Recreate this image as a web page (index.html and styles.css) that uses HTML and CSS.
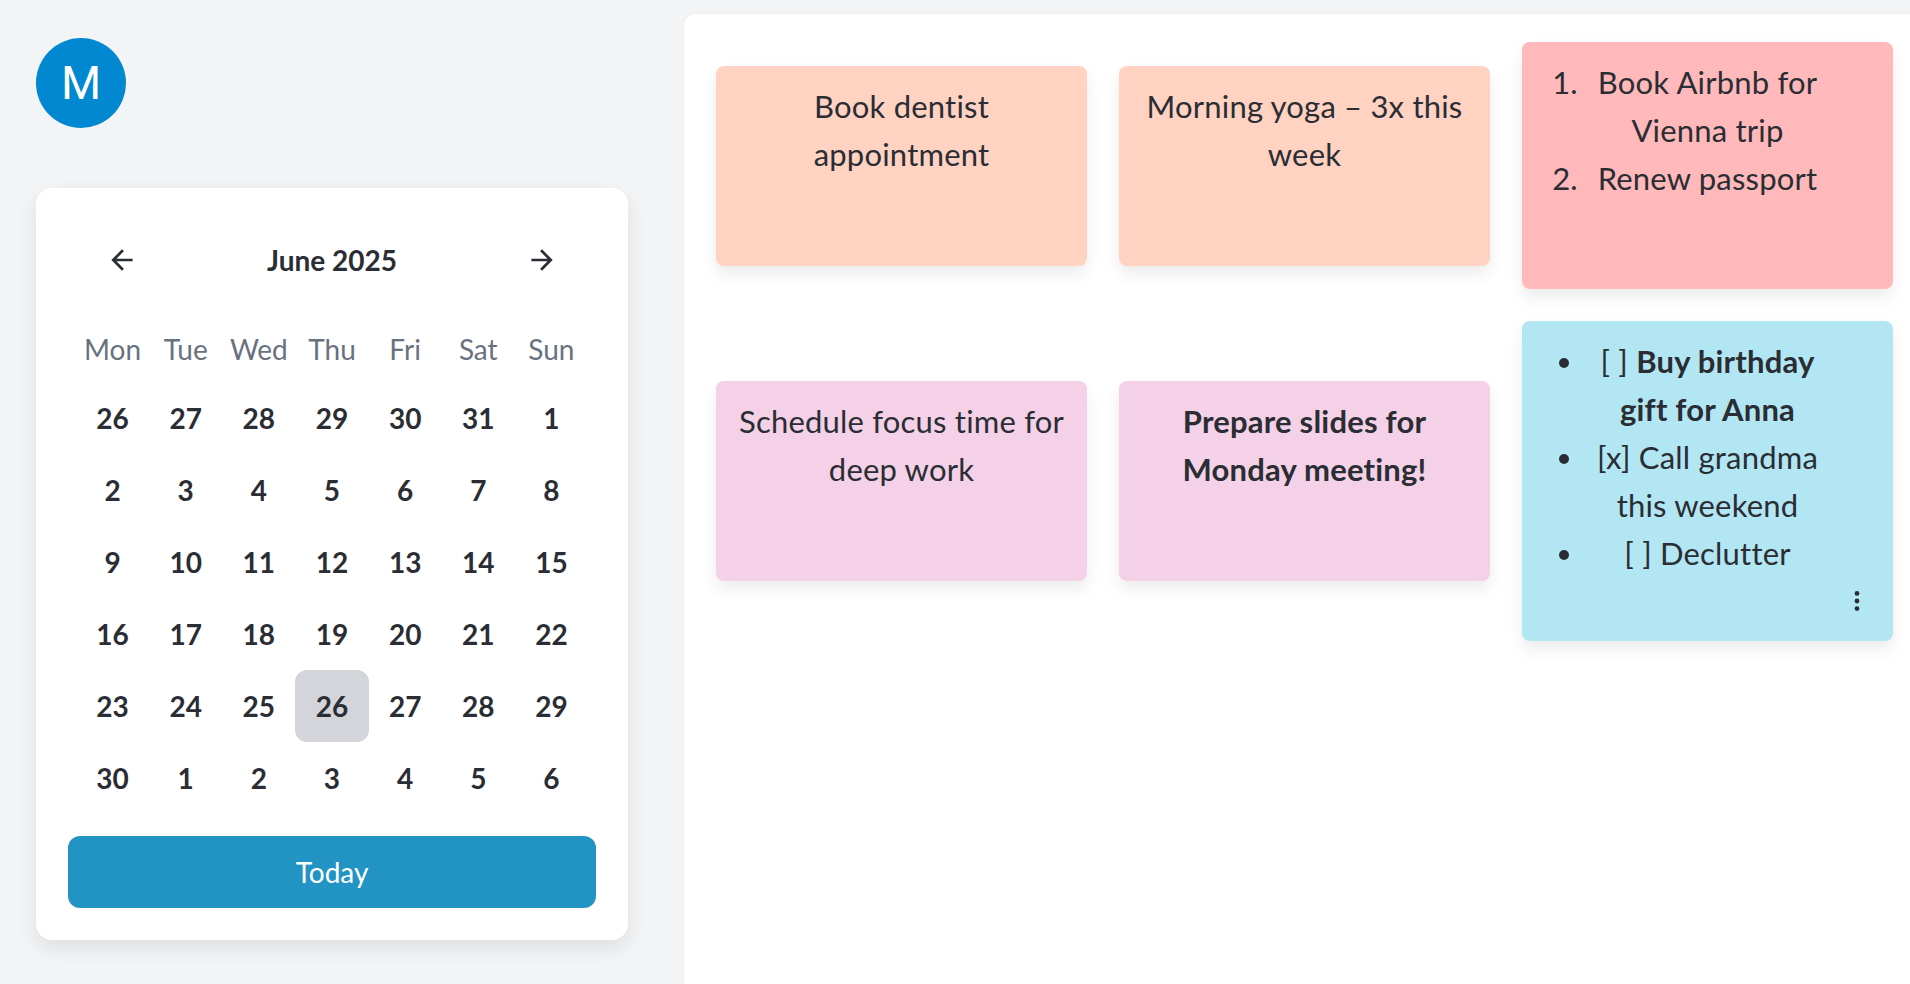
FILE: index.html
```html
<!DOCTYPE html>
<html lang="en">
<head>
  <meta charset="UTF-8" />
  <meta name="viewport" content="width=device-width, initial-scale=1.0"/>
  <title>Notes</title>
  <link rel="stylesheet" href="styles.css">
</head>
<body>

<div class="app">
  <aside class="sidebar">
    <div class="avatar">M</div>

    <div class="calendar">
      <div class="cal-header">
        <button class="cal-nav" aria-label="Previous month">
          <svg viewBox="0 0 24 24"><path d="M20 11H7.83l5.59-5.59L12 4l-8 8 8 8 1.41-1.41L7.83 13H20v-2z"/></svg>
        </button>
        <div class="cal-title">June 2025</div>
        <button class="cal-nav" aria-label="Next month">
          <svg viewBox="0 0 24 24"><path d="M12 4l-1.41 1.41L16.17 11H4v2h12.17l-5.58 5.59L12 20l8-8z"/></svg>
        </button>
      </div>

      <div class="cal-grid">
        <div class="weekday">Mon</div>
        <div class="weekday">Tue</div>
        <div class="weekday">Wed</div>
        <div class="weekday">Thu</div>
        <div class="weekday">Fri</div>
        <div class="weekday">Sat</div>
        <div class="weekday">Sun</div>

        <div class="day">26</div><div class="day">27</div><div class="day">28</div><div class="day">29</div><div class="day">30</div><div class="day">31</div><div class="day">1</div>
        <div class="day">2</div><div class="day">3</div><div class="day">4</div><div class="day">5</div><div class="day">6</div><div class="day">7</div><div class="day">8</div>
        <div class="day">9</div><div class="day">10</div><div class="day">11</div><div class="day">12</div><div class="day">13</div><div class="day">14</div><div class="day">15</div>
        <div class="day">16</div><div class="day">17</div><div class="day">18</div><div class="day">19</div><div class="day">20</div><div class="day">21</div><div class="day">22</div>
        <div class="day">23</div><div class="day">24</div><div class="day">25</div><div class="day today">26</div><div class="day">27</div><div class="day">28</div><div class="day">29</div>
        <div class="day">30</div><div class="day">1</div><div class="day">2</div><div class="day">3</div><div class="day">4</div><div class="day">5</div><div class="day">6</div>
      </div>

      <button class="today-btn">Today</button>
    </div>
  </aside>

  <main class="board">
    <div class="notes">
      <div class="note peach">
        <div class="note-body">Book dentist appointment</div>
        <div class="note-footer"></div>
      </div>

      <div class="note peach">
        <div class="note-body">Morning yoga – 3x this week</div>
        <div class="note-footer"></div>
      </div>

      <div class="note red">
        <div class="note-body">
          <ol>
            <li>Book Airbnb for Vienna trip</li>
            <li>Renew passport</li>
          </ol>
        </div>
        <div class="note-footer"></div>
      </div>

      <div class="note pink">
        <div class="note-body">Schedule focus time for deep work</div>
        <div class="note-footer"></div>
      </div>

      <div class="note pink">
        <div class="note-body"><strong>Prepare slides for Monday meeting!</strong></div>
        <div class="note-footer"></div>
      </div>

      <div class="note blue">
        <div class="note-body">
          <ul>
            <li>[ ] <strong>Buy birthday gift for Anna</strong></li>
            <li>[x] Call grandma this weekend</li>
            <li>[ ] Declutter</li>
          </ul>
        </div>
        <div class="note-footer">
          <button class="note-menu" aria-label="More">
            <svg viewBox="0 0 24 24"><circle cx="12" cy="5" r="2.2"/><circle cx="12" cy="12" r="2.2"/><circle cx="12" cy="19" r="2.2"/></svg>
          </button>
        </div>
      </div>
    </div>
  </main>
</div>

</body>
</html>
```

FILE: styles.css
```css
* { margin: 0; padding: 0; box-sizing: border-box; }

body {
  font-family: Lato, "Open Sans", sans-serif;
  background: #f3f4f6;
  color: #2a2d33;
}

button {
  font-family: inherit;
  border: none;
  background: none;
  cursor: pointer;
}

.app {
  display: flex;
  min-height: 100vh;
}

.sidebar {
  flex-shrink: 0;
  padding: 38px 56px 0 36px;
}

.avatar {
  width: 90px;
  height: 90px;
  border-radius: 50%;
  background: #0288d1;
  color: white;
  font-family: Roboto, sans-serif;
  font-size: 46px;
  display: flex;
  align-items: center;
  justify-content: center;
}

.calendar {
  margin-top: 60px;
  width: 592px;
  background: white;
  border-radius: 16px;
  padding: 32px;
  box-shadow: 0 8px 22px rgba(0, 0, 0, 0.09);
}

.cal-header {
  height: 80px;
  padding: 0 32px;
  display: flex;
  align-items: center;
  justify-content: space-between;
}

.cal-nav {
  width: 44px;
  height: 44px;
  display: flex;
  align-items: center;
  justify-content: center;
}

.cal-nav svg {
  width: 32px;
  height: 32px;
  fill: #2a2d33;
}

.cal-title {
  font-size: 28px;
  font-weight: bold;
}

.cal-grid {
  margin: 16px 8px 0;
  display: grid;
  grid-template-columns: repeat(7, 1fr);
  grid-template-rows: 66px;
  grid-auto-rows: 72px;
  font-size: 28px;
}

.weekday,
.day {
  display: flex;
  align-items: center;
  justify-content: center;
}

.weekday {
  color: #68727f;
}

.day {
  font-weight: bold;
  border-radius: 12px;
}

.day.today {
  background: #d4d5da;
}

.today-btn {
  margin-top: 22px;
  width: 100%;
  height: 72px;
  border-radius: 12px;
  background: #2194c4;
  color: white;
  font-size: 28px;
}

.board {
  flex: 1;
  margin-top: 14px;
  background: white;
  border-top-left-radius: 12px;
  box-shadow: 0 0 4px rgba(0, 0, 0, 0.04);
  padding: 28px 32px;
}

.notes {
  display: grid;
  grid-template-columns: repeat(3, 371px);
  column-gap: 32px;
  row-gap: 32px;
  align-items: center;
}

.note {
  min-height: 200px;
  padding: 16px;
  border-radius: 8px;
  font-size: 31px;
  letter-spacing: 0.2px;
  line-height: 48px;
  text-align: center;
  display: flex;
  flex-direction: column;
  box-shadow: 0 8px 16px rgba(0, 0, 0, 0.08);
}

.note.peach { background: #ffd2c2; }
.note.red { background: #ffb9ba; }
.note.pink { background: #f4d1e6; }
.note.blue { background: #b2e6f2; }

.note-body {
  flex-grow: 1;
}

.note-body ol,
.note-body ul {
  padding: 0 48px;
}

.note-body ol {
  margin-bottom: 23px;
}

.note-footer {
  height: 48px;
  display: flex;
  justify-content: flex-end;
  align-items: center;
}

.note-menu {
  width: 48px;
  height: 48px;
  display: flex;
  align-items: center;
  justify-content: center;
  margin-right: -4px;
}

.note-menu svg {
  width: 26px;
  height: 26px;
  fill: #2a2d33;
}
```
